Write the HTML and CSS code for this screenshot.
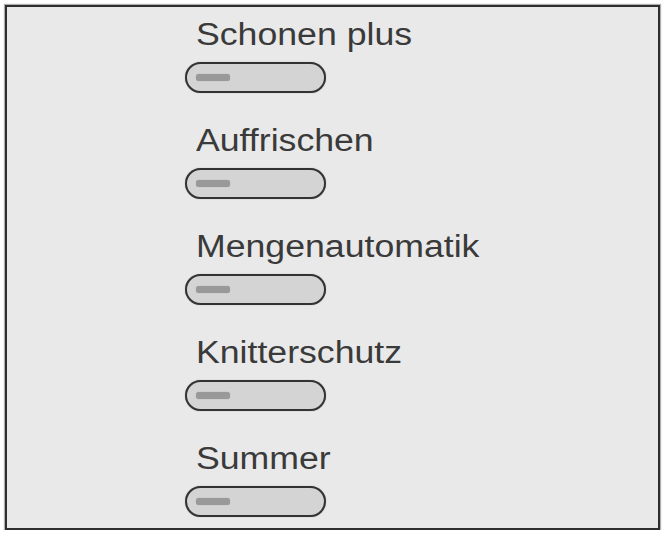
FILE: index.html
```html
<!DOCTYPE html>
<html lang="de">
<head>
<meta charset="utf-8">
<title>Einstellungen</title>
<link rel="stylesheet" href="styles.css">
</head>
<body>
<div class="frame">
  <div class="item">
    <div class="label"><span>Schonen plus</span></div>
    <div class="toggle"><span class="knob"></span></div>
  </div>
  <div class="item">
    <div class="label"><span>Auffrischen</span></div>
    <div class="toggle"><span class="knob"></span></div>
  </div>
  <div class="item">
    <div class="label"><span>Mengenautomatik</span></div>
    <div class="toggle"><span class="knob"></span></div>
  </div>
  <div class="item">
    <div class="label"><span>Knitterschutz</span></div>
    <div class="toggle"><span class="knob"></span></div>
  </div>
  <div class="item">
    <div class="label"><span>Summer</span></div>
    <div class="toggle"><span class="knob"></span></div>
  </div>
</div>
</body>
</html>
```
FILE: styles.css
```css
html, body {
  margin: 0;
  padding: 0;
  background: #ffffff;
}

.frame {
  box-sizing: border-box;
  margin: 5px 0 0 5px;
  width: 655px;
  height: 525px;
  border: 2px solid #2e2e2e;
  box-shadow: 0 0 1px 1px rgba(80, 80, 80, 0.45);
  background: #e9e9e9;
  padding-top: 11px;
  display: flex;
  flex-direction: column;
}

.item {
  flex: none;
  display: flex;
  flex-direction: column;
  align-items: flex-start;
  padding-left: 178px;
  height: 106px;
}

.item:last-child {
  height: auto;
}

.label {
  font-family: "Liberation Sans", Arial, sans-serif;
  font-size: 31px;
  line-height: 34px;
  color: #3a3a3a;
  padding-left: 11px;
  height: 34px;
  white-space: nowrap;
}

.label span {
  display: inline-block;
  transform: scaleX(1.15);
  transform-origin: left center;
}

.toggle {
  box-sizing: border-box;
  margin-top: 10px;
  width: 141px;
  height: 31px;
  border: 2px solid #333333;
  border-radius: 16px;
  background: #d4d4d4;
  display: flex;
  align-items: center;
  padding-left: 9px;
  box-shadow: 0 0 1px rgba(60, 60, 60, 0.5);
}

.knob {
  display: block;
  width: 34px;
  height: 7px;
  border-radius: 3px;
  background: #999999;
  box-shadow: 0 0 1px #999999;
}
```
